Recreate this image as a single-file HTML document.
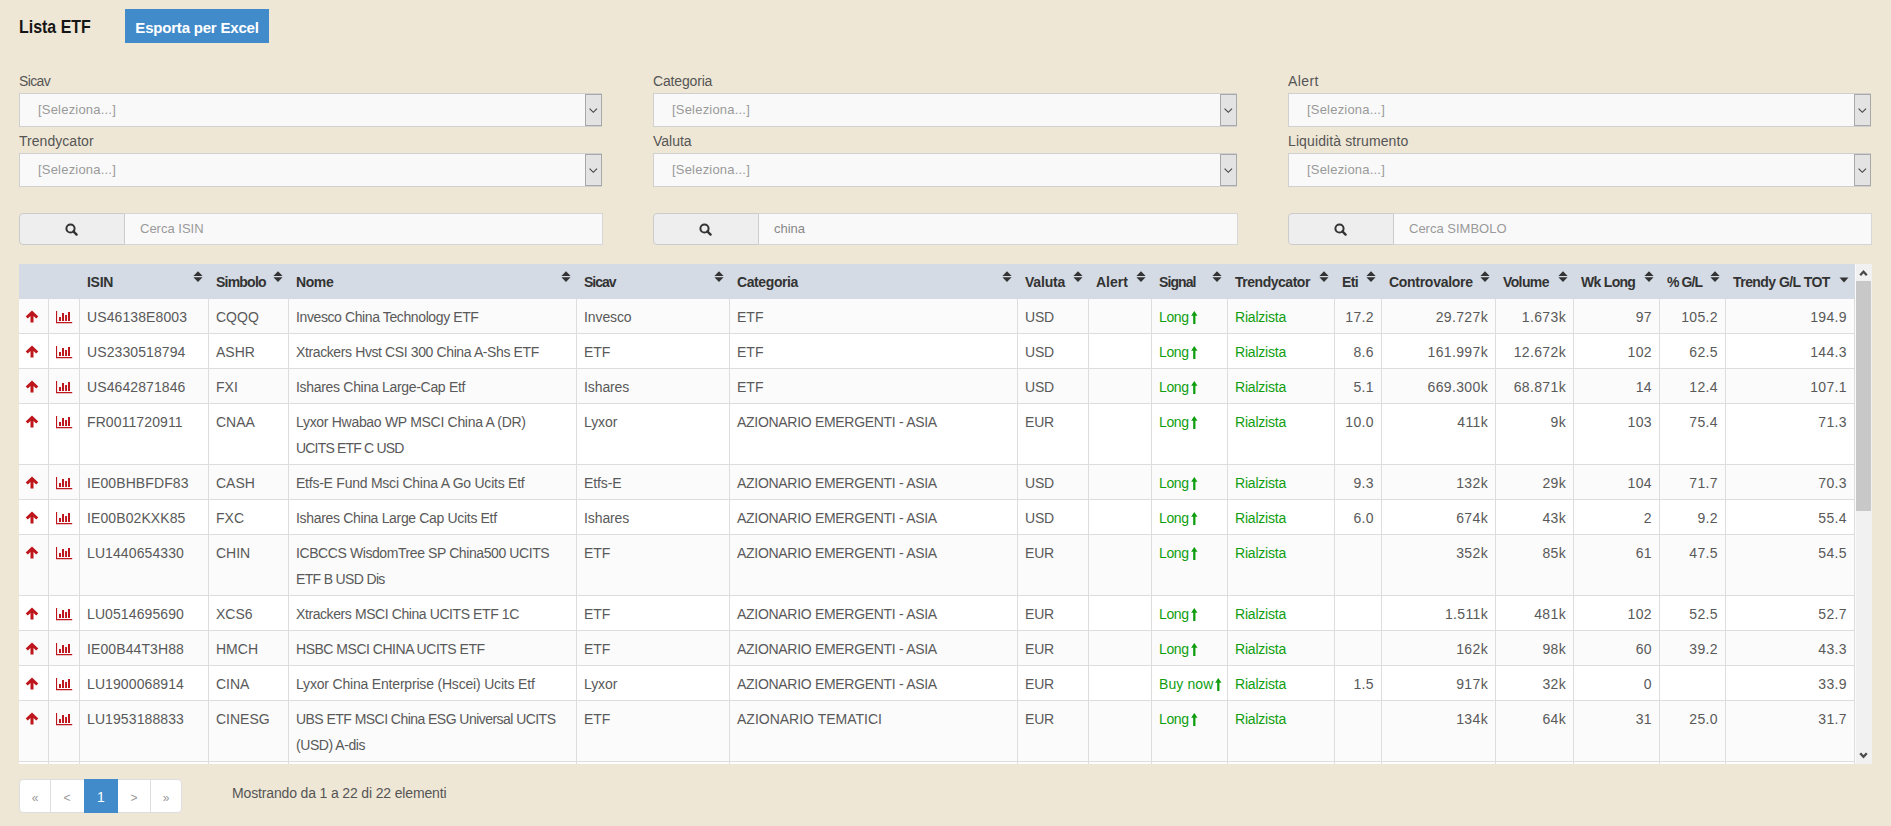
<!DOCTYPE html><html><head><meta charset="utf-8"><title>Lista ETF</title><style>
*{margin:0;padding:0;box-sizing:border-box}
html,body{width:1891px;height:826px;overflow:hidden;background:#EFE7D5;font-family:"Liberation Sans", sans-serif;}
.a{position:absolute;white-space:nowrap}
.t{font-size:14px;color:#595959;line-height:26px}
.h{font-size:14px;color:#333;font-weight:bold;line-height:20px}
.g{color:#109E10}
.lbl{font-size:14px;color:#555;line-height:16px}
.sel{background:#F9F9F9;border:1px solid #D0D0D0}
.ph{font-size:13px;color:#999;line-height:16px;letter-spacing:0.2px}
.dd{background:#E3E3E3;border:1px solid #A8A8A8}
</style></head><body>
<div class="a" style="left:19px;top:15px;font-size:19px;line-height:24px;font-weight:bold;color:#151515;transform:scaleX(0.84);transform-origin:0 0">Lista ETF</div>
<div class="a" style="left:125px;top:9px;width:144px;height:34px;background:#428BCA"></div>
<div class="a" style="left:125px;top:19px;width:144px;text-align:center;font-size:15px;letter-spacing:-0.2px;line-height:18px;font-weight:bold;color:#fff">Esporta per Excel</div>
<div class="a lbl" style="left:19px;top:73px;letter-spacing:-0.65px">Sicav</div>
<div class="a sel" style="left:19px;top:93px;width:583px;height:34px"></div>
<div class="a ph" style="left:38px;top:102px">[Seleziona...]</div>
<div class="a dd" style="left:585px;top:94px;width:17px;height:32px"><svg width="10" height="6" viewBox="0 0 10 6" style="position:absolute;left:2.5px;top:12.5px"><path d="M0.6 0.7 L4.3 4.3 L8 0.7" fill="none" stroke="#444" stroke-width="1.15"/></svg></div>
<div class="a lbl" style="left:19px;top:133px;letter-spacing:0.04px">Trendycator</div>
<div class="a sel" style="left:19px;top:153px;width:583px;height:34px"></div>
<div class="a ph" style="left:38px;top:162px">[Seleziona...]</div>
<div class="a dd" style="left:585px;top:154px;width:17px;height:32px"><svg width="10" height="6" viewBox="0 0 10 6" style="position:absolute;left:2.5px;top:12.5px"><path d="M0.6 0.7 L4.3 4.3 L8 0.7" fill="none" stroke="#444" stroke-width="1.15"/></svg></div>
<div class="a lbl" style="left:653px;top:73px;letter-spacing:-0.162px">Categoria</div>
<div class="a sel" style="left:653px;top:93px;width:584px;height:34px"></div>
<div class="a ph" style="left:672px;top:102px">[Seleziona...]</div>
<div class="a dd" style="left:1220px;top:94px;width:17px;height:32px"><svg width="10" height="6" viewBox="0 0 10 6" style="position:absolute;left:2.5px;top:12.5px"><path d="M0.6 0.7 L4.3 4.3 L8 0.7" fill="none" stroke="#444" stroke-width="1.15"/></svg></div>
<div class="a lbl" style="left:653px;top:133px;letter-spacing:-0.02px">Valuta</div>
<div class="a sel" style="left:653px;top:153px;width:584px;height:34px"></div>
<div class="a ph" style="left:672px;top:162px">[Seleziona...]</div>
<div class="a dd" style="left:1220px;top:154px;width:17px;height:32px"><svg width="10" height="6" viewBox="0 0 10 6" style="position:absolute;left:2.5px;top:12.5px"><path d="M0.6 0.7 L4.3 4.3 L8 0.7" fill="none" stroke="#444" stroke-width="1.15"/></svg></div>
<div class="a lbl" style="left:1288px;top:73px;letter-spacing:0.4px">Alert</div>
<div class="a sel" style="left:1288px;top:93px;width:583px;height:34px"></div>
<div class="a ph" style="left:1307px;top:102px">[Seleziona...]</div>
<div class="a dd" style="left:1854px;top:94px;width:17px;height:32px"><svg width="10" height="6" viewBox="0 0 10 6" style="position:absolute;left:2.5px;top:12.5px"><path d="M0.6 0.7 L4.3 4.3 L8 0.7" fill="none" stroke="#444" stroke-width="1.15"/></svg></div>
<div class="a lbl" style="left:1288px;top:133px;letter-spacing:0.111px">Liquidità strumento</div>
<div class="a sel" style="left:1288px;top:153px;width:583px;height:34px"></div>
<div class="a ph" style="left:1307px;top:162px">[Seleziona...]</div>
<div class="a dd" style="left:1854px;top:154px;width:17px;height:32px"><svg width="10" height="6" viewBox="0 0 10 6" style="position:absolute;left:2.5px;top:12.5px"><path d="M0.6 0.7 L4.3 4.3 L8 0.7" fill="none" stroke="#444" stroke-width="1.15"/></svg></div>
<div class="a" style="left:19px;top:213px;width:106px;height:32px;background:#EEEEEE;border:1px solid #CCCCCC;border-radius:4px 0 0 4px"><svg width="14" height="14" viewBox="0 0 14 14" style="position:absolute;left:45px;top:9px"><circle cx="5.5" cy="5.5" r="4.1" fill="none" stroke="#333" stroke-width="2"/><path d="M8.4 8.4 L11.6 11.6" stroke="#333" stroke-width="2.4" stroke-linecap="round"/></svg></div>
<div class="a" style="left:125px;top:213px;width:478px;height:32px;background:#F9F9F9;border:1px solid #D6D6D6;border-left:none"></div>
<div class="a" style="left:140px;top:221px;font-size:13px;line-height:16px;color:#999">Cerca ISIN</div>
<div class="a" style="left:653px;top:213px;width:106px;height:32px;background:#EEEEEE;border:1px solid #CCCCCC;border-radius:4px 0 0 4px"><svg width="14" height="14" viewBox="0 0 14 14" style="position:absolute;left:45px;top:9px"><circle cx="5.5" cy="5.5" r="4.1" fill="none" stroke="#333" stroke-width="2"/><path d="M8.4 8.4 L11.6 11.6" stroke="#333" stroke-width="2.4" stroke-linecap="round"/></svg></div>
<div class="a" style="left:759px;top:213px;width:479px;height:32px;background:#F9F9F9;border:1px solid #D6D6D6;border-left:none"></div>
<div class="a" style="left:774px;top:221px;font-size:13px;line-height:16px;color:#888">china</div>
<div class="a" style="left:1288px;top:213px;width:106px;height:32px;background:#EEEEEE;border:1px solid #CCCCCC;border-radius:4px 0 0 4px"><svg width="14" height="14" viewBox="0 0 14 14" style="position:absolute;left:45px;top:9px"><circle cx="5.5" cy="5.5" r="4.1" fill="none" stroke="#333" stroke-width="2"/><path d="M8.4 8.4 L11.6 11.6" stroke="#333" stroke-width="2.4" stroke-linecap="round"/></svg></div>
<div class="a" style="left:1394px;top:213px;width:478px;height:32px;background:#F9F9F9;border:1px solid #D6D6D6;border-left:none"></div>
<div class="a" style="left:1409px;top:221px;font-size:13px;line-height:16px;color:#999">Cerca SIMBOLO</div>
<div class="a" style="left:19px;top:264px;width:1836px;height:35px;background:#D4DBE4"></div>
<div class="a h" style="left:87px;top:272px;letter-spacing:-0.27px">ISIN</div>
<div class="a" style="left:193px;top:271px;line-height:0"><svg width="10" height="12" viewBox="0 0 10 12"><path d="M5 0.2 L9.6 4.9 L0.4 4.9 Z M0.4 6.3 L9.6 6.3 L5 11 Z" fill="#333"/></svg></div>
<div class="a h" style="left:216px;top:272px;letter-spacing:-0.78px">Simbolo</div>
<div class="a" style="left:273px;top:271px;line-height:0"><svg width="10" height="12" viewBox="0 0 10 12"><path d="M5 0.2 L9.6 4.9 L0.4 4.9 Z M0.4 6.3 L9.6 6.3 L5 11 Z" fill="#333"/></svg></div>
<div class="a h" style="left:296px;top:272px;letter-spacing:-0.4px">Nome</div>
<div class="a" style="left:561px;top:271px;line-height:0"><svg width="10" height="12" viewBox="0 0 10 12"><path d="M5 0.2 L9.6 4.9 L0.4 4.9 Z M0.4 6.3 L9.6 6.3 L5 11 Z" fill="#333"/></svg></div>
<div class="a h" style="left:584px;top:272px;letter-spacing:-1.0px">Sicav</div>
<div class="a" style="left:714px;top:271px;line-height:0"><svg width="10" height="12" viewBox="0 0 10 12"><path d="M5 0.2 L9.6 4.9 L0.4 4.9 Z M0.4 6.3 L9.6 6.3 L5 11 Z" fill="#333"/></svg></div>
<div class="a h" style="left:737px;top:272px;letter-spacing:-0.4px">Categoria</div>
<div class="a" style="left:1002px;top:271px;line-height:0"><svg width="10" height="12" viewBox="0 0 10 12"><path d="M5 0.2 L9.6 4.9 L0.4 4.9 Z M0.4 6.3 L9.6 6.3 L5 11 Z" fill="#333"/></svg></div>
<div class="a h" style="left:1025px;top:272px;letter-spacing:-0.2px">Valuta</div>
<div class="a" style="left:1073px;top:271px;line-height:0"><svg width="10" height="12" viewBox="0 0 10 12"><path d="M5 0.2 L9.6 4.9 L0.4 4.9 Z M0.4 6.3 L9.6 6.3 L5 11 Z" fill="#333"/></svg></div>
<div class="a h" style="left:1096px;top:272px;letter-spacing:0.0px">Alert</div>
<div class="a" style="left:1136px;top:271px;line-height:0"><svg width="10" height="12" viewBox="0 0 10 12"><path d="M5 0.2 L9.6 4.9 L0.4 4.9 Z M0.4 6.3 L9.6 6.3 L5 11 Z" fill="#333"/></svg></div>
<div class="a h" style="left:1159px;top:272px;letter-spacing:-0.9px">Signal</div>
<div class="a" style="left:1212px;top:271px;line-height:0"><svg width="10" height="12" viewBox="0 0 10 12"><path d="M5 0.2 L9.6 4.9 L0.4 4.9 Z M0.4 6.3 L9.6 6.3 L5 11 Z" fill="#333"/></svg></div>
<div class="a h" style="left:1235px;top:272px;letter-spacing:-0.48px">Trendycator</div>
<div class="a" style="left:1319px;top:271px;line-height:0"><svg width="10" height="12" viewBox="0 0 10 12"><path d="M5 0.2 L9.6 4.9 L0.4 4.9 Z M0.4 6.3 L9.6 6.3 L5 11 Z" fill="#333"/></svg></div>
<div class="a h" style="left:1342px;top:272px;letter-spacing:-0.6px">Eti</div>
<div class="a" style="left:1366px;top:271px;line-height:0"><svg width="10" height="12" viewBox="0 0 10 12"><path d="M5 0.2 L9.6 4.9 L0.4 4.9 Z M0.4 6.3 L9.6 6.3 L5 11 Z" fill="#333"/></svg></div>
<div class="a h" style="left:1389px;top:272px;letter-spacing:-0.29px">Controvalore</div>
<div class="a" style="left:1480px;top:271px;line-height:0"><svg width="10" height="12" viewBox="0 0 10 12"><path d="M5 0.2 L9.6 4.9 L0.4 4.9 Z M0.4 6.3 L9.6 6.3 L5 11 Z" fill="#333"/></svg></div>
<div class="a h" style="left:1503px;top:272px;letter-spacing:-0.62px">Volume</div>
<div class="a" style="left:1558px;top:271px;line-height:0"><svg width="10" height="12" viewBox="0 0 10 12"><path d="M5 0.2 L9.6 4.9 L0.4 4.9 Z M0.4 6.3 L9.6 6.3 L5 11 Z" fill="#333"/></svg></div>
<div class="a h" style="left:1581px;top:272px;letter-spacing:-0.7px">Wk Long</div>
<div class="a" style="left:1644px;top:271px;line-height:0"><svg width="10" height="12" viewBox="0 0 10 12"><path d="M5 0.2 L9.6 4.9 L0.4 4.9 Z M0.4 6.3 L9.6 6.3 L5 11 Z" fill="#333"/></svg></div>
<div class="a h" style="left:1667px;top:272px;letter-spacing:-0.9px">% G/L</div>
<div class="a" style="left:1710px;top:271px;line-height:0"><svg width="10" height="12" viewBox="0 0 10 12"><path d="M5 0.2 L9.6 4.9 L0.4 4.9 Z M0.4 6.3 L9.6 6.3 L5 11 Z" fill="#333"/></svg></div>
<div class="a h" style="left:1733px;top:272px;letter-spacing:-0.55px">Trendy G/L TOT</div>
<div class="a" style="left:1839px;top:277px;line-height:0"><svg width="10" height="6" viewBox="0 0 10 6"><path d="M0.5 0.5 L9.5 0.5 L5 5.5 Z" fill="#333"/></svg></div>
<div class="a" style="left:19px;top:299px;width:1836px;height:465px;overflow:hidden">
<div class="a" style="left:0;top:0px;width:1836px;height:35px;background:#FBFBFB;border-bottom:1px solid #DDDDDD"></div>
<div class="a" style="left:6px;top:11px;line-height:0"><svg width="14" height="13" viewBox="0 0 14 13"><path d="M7 0.5 L13.3 6.6 L11.2 8.6 L8.5 5.9 L8.5 12.5 L5.5 12.5 L5.5 5.9 L2.8 8.6 L0.7 6.6 Z" fill="#BD161C"/></svg></div>
<div class="a" style="left:37px;top:12px;line-height:0"><svg width="17" height="13" viewBox="0 0 17 13"><path d="M0 0 H1.1 V11 H16.2 V12.2 H0 Z M3 6 H5 V9.9 H3 Z M6 2 H8 V9.9 H6 Z M9.1 4 H11 V9.9 H9.1 Z M12 1 H14 V9.9 H12 Z" fill="#BD161C"/></svg></div>
<div class="a t" style="left:68px;top:5px;letter-spacing:0.1px">US46138E8003</div>
<div class="a t" style="left:197px;top:5px;letter-spacing:0px">CQQQ</div>
<div class="a t" style="left:277px;top:5px;letter-spacing:-0.393px">Invesco China Technology ETF</div>
<div class="a t" style="left:565px;top:5px;letter-spacing:-0.1px">Invesco</div>
<div class="a t" style="left:718px;top:5px;letter-spacing:0.0px">ETF</div>
<div class="a t" style="left:1006px;top:5px;letter-spacing:-0.2px">USD</div>
<div class="a t g" style="left:1140px;top:5px;letter-spacing:-0.4px">Long<span style="display:inline-block;width:2px"></span><svg width="7" height="13" viewBox="0 0 7 13" style="vertical-align:-2px"><path d="M3.3 0 L6.5 4.8 L4.45 4.8 L4.45 13 L2.15 13 L2.15 4.8 L0.1 4.8 Z" fill="#109E10"/></svg></div>
<div class="a t g" style="left:1216px;top:5px;letter-spacing:-0.2px">Rialzista</div>
<div class="a t" style="right:481px;top:5px;letter-spacing:0.35px">17.2</div>
<div class="a t" style="right:367px;top:5px;letter-spacing:0.35px">29.727k</div>
<div class="a t" style="right:289px;top:5px;letter-spacing:0.35px">1.673k</div>
<div class="a t" style="right:203px;top:5px;letter-spacing:0.35px">97</div>
<div class="a t" style="right:137px;top:5px;letter-spacing:0.35px">105.2</div>
<div class="a t" style="right:8px;top:5px;letter-spacing:0.35px">194.9</div>
<div class="a" style="left:0;top:35px;width:1836px;height:35px;background:#FFFFFF;border-bottom:1px solid #DDDDDD"></div>
<div class="a" style="left:6px;top:46px;line-height:0"><svg width="14" height="13" viewBox="0 0 14 13"><path d="M7 0.5 L13.3 6.6 L11.2 8.6 L8.5 5.9 L8.5 12.5 L5.5 12.5 L5.5 5.9 L2.8 8.6 L0.7 6.6 Z" fill="#BD161C"/></svg></div>
<div class="a" style="left:37px;top:47px;line-height:0"><svg width="17" height="13" viewBox="0 0 17 13"><path d="M0 0 H1.1 V11 H16.2 V12.2 H0 Z M3 6 H5 V9.9 H3 Z M6 2 H8 V9.9 H6 Z M9.1 4 H11 V9.9 H9.1 Z M12 1 H14 V9.9 H12 Z" fill="#BD161C"/></svg></div>
<div class="a t" style="left:68px;top:40px;letter-spacing:0.1px">US2330518794</div>
<div class="a t" style="left:197px;top:40px;letter-spacing:0px">ASHR</div>
<div class="a t" style="left:277px;top:40px;letter-spacing:-0.386px">Xtrackers Hvst CSI 300 China A-Shs ETF</div>
<div class="a t" style="left:565px;top:40px;letter-spacing:-0.1px">ETF</div>
<div class="a t" style="left:718px;top:40px;letter-spacing:0.0px">ETF</div>
<div class="a t" style="left:1006px;top:40px;letter-spacing:-0.2px">USD</div>
<div class="a t g" style="left:1140px;top:40px;letter-spacing:-0.4px">Long<span style="display:inline-block;width:2px"></span><svg width="7" height="13" viewBox="0 0 7 13" style="vertical-align:-2px"><path d="M3.3 0 L6.5 4.8 L4.45 4.8 L4.45 13 L2.15 13 L2.15 4.8 L0.1 4.8 Z" fill="#109E10"/></svg></div>
<div class="a t g" style="left:1216px;top:40px;letter-spacing:-0.2px">Rialzista</div>
<div class="a t" style="right:481px;top:40px;letter-spacing:0.35px">8.6</div>
<div class="a t" style="right:367px;top:40px;letter-spacing:0.35px">161.997k</div>
<div class="a t" style="right:289px;top:40px;letter-spacing:0.35px">12.672k</div>
<div class="a t" style="right:203px;top:40px;letter-spacing:0.35px">102</div>
<div class="a t" style="right:137px;top:40px;letter-spacing:0.35px">62.5</div>
<div class="a t" style="right:8px;top:40px;letter-spacing:0.35px">144.3</div>
<div class="a" style="left:0;top:70px;width:1836px;height:35px;background:#FBFBFB;border-bottom:1px solid #DDDDDD"></div>
<div class="a" style="left:6px;top:81px;line-height:0"><svg width="14" height="13" viewBox="0 0 14 13"><path d="M7 0.5 L13.3 6.6 L11.2 8.6 L8.5 5.9 L8.5 12.5 L5.5 12.5 L5.5 5.9 L2.8 8.6 L0.7 6.6 Z" fill="#BD161C"/></svg></div>
<div class="a" style="left:37px;top:82px;line-height:0"><svg width="17" height="13" viewBox="0 0 17 13"><path d="M0 0 H1.1 V11 H16.2 V12.2 H0 Z M3 6 H5 V9.9 H3 Z M6 2 H8 V9.9 H6 Z M9.1 4 H11 V9.9 H9.1 Z M12 1 H14 V9.9 H12 Z" fill="#BD161C"/></svg></div>
<div class="a t" style="left:68px;top:75px;letter-spacing:0.1px">US4642871846</div>
<div class="a t" style="left:197px;top:75px;letter-spacing:0px">FXI</div>
<div class="a t" style="left:277px;top:75px;letter-spacing:-0.308px">Ishares China Large-Cap Etf</div>
<div class="a t" style="left:565px;top:75px;letter-spacing:-0.1px">Ishares</div>
<div class="a t" style="left:718px;top:75px;letter-spacing:0.0px">ETF</div>
<div class="a t" style="left:1006px;top:75px;letter-spacing:-0.2px">USD</div>
<div class="a t g" style="left:1140px;top:75px;letter-spacing:-0.4px">Long<span style="display:inline-block;width:2px"></span><svg width="7" height="13" viewBox="0 0 7 13" style="vertical-align:-2px"><path d="M3.3 0 L6.5 4.8 L4.45 4.8 L4.45 13 L2.15 13 L2.15 4.8 L0.1 4.8 Z" fill="#109E10"/></svg></div>
<div class="a t g" style="left:1216px;top:75px;letter-spacing:-0.2px">Rialzista</div>
<div class="a t" style="right:481px;top:75px;letter-spacing:0.35px">5.1</div>
<div class="a t" style="right:367px;top:75px;letter-spacing:0.35px">669.300k</div>
<div class="a t" style="right:289px;top:75px;letter-spacing:0.35px">68.871k</div>
<div class="a t" style="right:203px;top:75px;letter-spacing:0.35px">14</div>
<div class="a t" style="right:137px;top:75px;letter-spacing:0.35px">12.4</div>
<div class="a t" style="right:8px;top:75px;letter-spacing:0.35px">107.1</div>
<div class="a" style="left:0;top:105px;width:1836px;height:61px;background:#FFFFFF;border-bottom:1px solid #DDDDDD"></div>
<div class="a" style="left:6px;top:116px;line-height:0"><svg width="14" height="13" viewBox="0 0 14 13"><path d="M7 0.5 L13.3 6.6 L11.2 8.6 L8.5 5.9 L8.5 12.5 L5.5 12.5 L5.5 5.9 L2.8 8.6 L0.7 6.6 Z" fill="#BD161C"/></svg></div>
<div class="a" style="left:37px;top:117px;line-height:0"><svg width="17" height="13" viewBox="0 0 17 13"><path d="M0 0 H1.1 V11 H16.2 V12.2 H0 Z M3 6 H5 V9.9 H3 Z M6 2 H8 V9.9 H6 Z M9.1 4 H11 V9.9 H9.1 Z M12 1 H14 V9.9 H12 Z" fill="#BD161C"/></svg></div>
<div class="a t" style="left:68px;top:110px;letter-spacing:0.1px">FR0011720911</div>
<div class="a t" style="left:197px;top:110px;letter-spacing:0px">CNAA</div>
<div class="a t" style="left:277px;top:110px;letter-spacing:-0.303px">Lyxor Hwabao WP MSCI China A (DR)</div>
<div class="a t" style="left:277px;top:136px;letter-spacing:-0.814px">UCITS ETF C USD</div>
<div class="a t" style="left:565px;top:110px;letter-spacing:-0.1px">Lyxor</div>
<div class="a t" style="left:718px;top:110px;letter-spacing:-0.3px">AZIONARIO EMERGENTI - ASIA</div>
<div class="a t" style="left:1006px;top:110px;letter-spacing:-0.2px">EUR</div>
<div class="a t g" style="left:1140px;top:110px;letter-spacing:-0.4px">Long<span style="display:inline-block;width:2px"></span><svg width="7" height="13" viewBox="0 0 7 13" style="vertical-align:-2px"><path d="M3.3 0 L6.5 4.8 L4.45 4.8 L4.45 13 L2.15 13 L2.15 4.8 L0.1 4.8 Z" fill="#109E10"/></svg></div>
<div class="a t g" style="left:1216px;top:110px;letter-spacing:-0.2px">Rialzista</div>
<div class="a t" style="right:481px;top:110px;letter-spacing:0.35px">10.0</div>
<div class="a t" style="right:367px;top:110px;letter-spacing:0.35px">411k</div>
<div class="a t" style="right:289px;top:110px;letter-spacing:0.35px">9k</div>
<div class="a t" style="right:203px;top:110px;letter-spacing:0.35px">103</div>
<div class="a t" style="right:137px;top:110px;letter-spacing:0.35px">75.4</div>
<div class="a t" style="right:8px;top:110px;letter-spacing:0.35px">71.3</div>
<div class="a" style="left:0;top:166px;width:1836px;height:35px;background:#FBFBFB;border-bottom:1px solid #DDDDDD"></div>
<div class="a" style="left:6px;top:177px;line-height:0"><svg width="14" height="13" viewBox="0 0 14 13"><path d="M7 0.5 L13.3 6.6 L11.2 8.6 L8.5 5.9 L8.5 12.5 L5.5 12.5 L5.5 5.9 L2.8 8.6 L0.7 6.6 Z" fill="#BD161C"/></svg></div>
<div class="a" style="left:37px;top:178px;line-height:0"><svg width="17" height="13" viewBox="0 0 17 13"><path d="M0 0 H1.1 V11 H16.2 V12.2 H0 Z M3 6 H5 V9.9 H3 Z M6 2 H8 V9.9 H6 Z M9.1 4 H11 V9.9 H9.1 Z M12 1 H14 V9.9 H12 Z" fill="#BD161C"/></svg></div>
<div class="a t" style="left:68px;top:171px;letter-spacing:0.1px">IE00BHBFDF83</div>
<div class="a t" style="left:197px;top:171px;letter-spacing:0px">CASH</div>
<div class="a t" style="left:277px;top:171px;letter-spacing:-0.239px">Etfs-E Fund Msci China A Go Ucits Etf</div>
<div class="a t" style="left:565px;top:171px;letter-spacing:-0.1px">Etfs-E</div>
<div class="a t" style="left:718px;top:171px;letter-spacing:-0.3px">AZIONARIO EMERGENTI - ASIA</div>
<div class="a t" style="left:1006px;top:171px;letter-spacing:-0.2px">USD</div>
<div class="a t g" style="left:1140px;top:171px;letter-spacing:-0.4px">Long<span style="display:inline-block;width:2px"></span><svg width="7" height="13" viewBox="0 0 7 13" style="vertical-align:-2px"><path d="M3.3 0 L6.5 4.8 L4.45 4.8 L4.45 13 L2.15 13 L2.15 4.8 L0.1 4.8 Z" fill="#109E10"/></svg></div>
<div class="a t g" style="left:1216px;top:171px;letter-spacing:-0.2px">Rialzista</div>
<div class="a t" style="right:481px;top:171px;letter-spacing:0.35px">9.3</div>
<div class="a t" style="right:367px;top:171px;letter-spacing:0.35px">132k</div>
<div class="a t" style="right:289px;top:171px;letter-spacing:0.35px">29k</div>
<div class="a t" style="right:203px;top:171px;letter-spacing:0.35px">104</div>
<div class="a t" style="right:137px;top:171px;letter-spacing:0.35px">71.7</div>
<div class="a t" style="right:8px;top:171px;letter-spacing:0.35px">70.3</div>
<div class="a" style="left:0;top:201px;width:1836px;height:35px;background:#FFFFFF;border-bottom:1px solid #DDDDDD"></div>
<div class="a" style="left:6px;top:212px;line-height:0"><svg width="14" height="13" viewBox="0 0 14 13"><path d="M7 0.5 L13.3 6.6 L11.2 8.6 L8.5 5.9 L8.5 12.5 L5.5 12.5 L5.5 5.9 L2.8 8.6 L0.7 6.6 Z" fill="#BD161C"/></svg></div>
<div class="a" style="left:37px;top:213px;line-height:0"><svg width="17" height="13" viewBox="0 0 17 13"><path d="M0 0 H1.1 V11 H16.2 V12.2 H0 Z M3 6 H5 V9.9 H3 Z M6 2 H8 V9.9 H6 Z M9.1 4 H11 V9.9 H9.1 Z M12 1 H14 V9.9 H12 Z" fill="#BD161C"/></svg></div>
<div class="a t" style="left:68px;top:206px;letter-spacing:0.1px">IE00B02KXK85</div>
<div class="a t" style="left:197px;top:206px;letter-spacing:0px">FXC</div>
<div class="a t" style="left:277px;top:206px;letter-spacing:-0.331px">Ishares China Large Cap Ucits Etf</div>
<div class="a t" style="left:565px;top:206px;letter-spacing:-0.1px">Ishares</div>
<div class="a t" style="left:718px;top:206px;letter-spacing:-0.3px">AZIONARIO EMERGENTI - ASIA</div>
<div class="a t" style="left:1006px;top:206px;letter-spacing:-0.2px">USD</div>
<div class="a t g" style="left:1140px;top:206px;letter-spacing:-0.4px">Long<span style="display:inline-block;width:2px"></span><svg width="7" height="13" viewBox="0 0 7 13" style="vertical-align:-2px"><path d="M3.3 0 L6.5 4.8 L4.45 4.8 L4.45 13 L2.15 13 L2.15 4.8 L0.1 4.8 Z" fill="#109E10"/></svg></div>
<div class="a t g" style="left:1216px;top:206px;letter-spacing:-0.2px">Rialzista</div>
<div class="a t" style="right:481px;top:206px;letter-spacing:0.35px">6.0</div>
<div class="a t" style="right:367px;top:206px;letter-spacing:0.35px">674k</div>
<div class="a t" style="right:289px;top:206px;letter-spacing:0.35px">43k</div>
<div class="a t" style="right:203px;top:206px;letter-spacing:0.35px">2</div>
<div class="a t" style="right:137px;top:206px;letter-spacing:0.35px">9.2</div>
<div class="a t" style="right:8px;top:206px;letter-spacing:0.35px">55.4</div>
<div class="a" style="left:0;top:236px;width:1836px;height:61px;background:#FBFBFB;border-bottom:1px solid #DDDDDD"></div>
<div class="a" style="left:6px;top:247px;line-height:0"><svg width="14" height="13" viewBox="0 0 14 13"><path d="M7 0.5 L13.3 6.6 L11.2 8.6 L8.5 5.9 L8.5 12.5 L5.5 12.5 L5.5 5.9 L2.8 8.6 L0.7 6.6 Z" fill="#BD161C"/></svg></div>
<div class="a" style="left:37px;top:248px;line-height:0"><svg width="17" height="13" viewBox="0 0 17 13"><path d="M0 0 H1.1 V11 H16.2 V12.2 H0 Z M3 6 H5 V9.9 H3 Z M6 2 H8 V9.9 H6 Z M9.1 4 H11 V9.9 H9.1 Z M12 1 H14 V9.9 H12 Z" fill="#BD161C"/></svg></div>
<div class="a t" style="left:68px;top:241px;letter-spacing:0.1px">LU1440654330</div>
<div class="a t" style="left:197px;top:241px;letter-spacing:0px">CHIN</div>
<div class="a t" style="left:277px;top:241px;letter-spacing:-0.412px">ICBCCS WisdomTree SP China500 UCITS</div>
<div class="a t" style="left:277px;top:267px;letter-spacing:-0.658px">ETF B USD Dis</div>
<div class="a t" style="left:565px;top:241px;letter-spacing:-0.1px">ETF</div>
<div class="a t" style="left:718px;top:241px;letter-spacing:-0.3px">AZIONARIO EMERGENTI - ASIA</div>
<div class="a t" style="left:1006px;top:241px;letter-spacing:-0.2px">EUR</div>
<div class="a t g" style="left:1140px;top:241px;letter-spacing:-0.4px">Long<span style="display:inline-block;width:2px"></span><svg width="7" height="13" viewBox="0 0 7 13" style="vertical-align:-2px"><path d="M3.3 0 L6.5 4.8 L4.45 4.8 L4.45 13 L2.15 13 L2.15 4.8 L0.1 4.8 Z" fill="#109E10"/></svg></div>
<div class="a t g" style="left:1216px;top:241px;letter-spacing:-0.2px">Rialzista</div>
<div class="a t" style="right:367px;top:241px;letter-spacing:0.35px">352k</div>
<div class="a t" style="right:289px;top:241px;letter-spacing:0.35px">85k</div>
<div class="a t" style="right:203px;top:241px;letter-spacing:0.35px">61</div>
<div class="a t" style="right:137px;top:241px;letter-spacing:0.35px">47.5</div>
<div class="a t" style="right:8px;top:241px;letter-spacing:0.35px">54.5</div>
<div class="a" style="left:0;top:297px;width:1836px;height:35px;background:#FFFFFF;border-bottom:1px solid #DDDDDD"></div>
<div class="a" style="left:6px;top:308px;line-height:0"><svg width="14" height="13" viewBox="0 0 14 13"><path d="M7 0.5 L13.3 6.6 L11.2 8.6 L8.5 5.9 L8.5 12.5 L5.5 12.5 L5.5 5.9 L2.8 8.6 L0.7 6.6 Z" fill="#BD161C"/></svg></div>
<div class="a" style="left:37px;top:309px;line-height:0"><svg width="17" height="13" viewBox="0 0 17 13"><path d="M0 0 H1.1 V11 H16.2 V12.2 H0 Z M3 6 H5 V9.9 H3 Z M6 2 H8 V9.9 H6 Z M9.1 4 H11 V9.9 H9.1 Z M12 1 H14 V9.9 H12 Z" fill="#BD161C"/></svg></div>
<div class="a t" style="left:68px;top:302px;letter-spacing:0.1px">LU0514695690</div>
<div class="a t" style="left:197px;top:302px;letter-spacing:0px">XCS6</div>
<div class="a t" style="left:277px;top:302px;letter-spacing:-0.413px">Xtrackers MSCI China UCITS ETF 1C</div>
<div class="a t" style="left:565px;top:302px;letter-spacing:-0.1px">ETF</div>
<div class="a t" style="left:718px;top:302px;letter-spacing:-0.3px">AZIONARIO EMERGENTI - ASIA</div>
<div class="a t" style="left:1006px;top:302px;letter-spacing:-0.2px">EUR</div>
<div class="a t g" style="left:1140px;top:302px;letter-spacing:-0.4px">Long<span style="display:inline-block;width:2px"></span><svg width="7" height="13" viewBox="0 0 7 13" style="vertical-align:-2px"><path d="M3.3 0 L6.5 4.8 L4.45 4.8 L4.45 13 L2.15 13 L2.15 4.8 L0.1 4.8 Z" fill="#109E10"/></svg></div>
<div class="a t g" style="left:1216px;top:302px;letter-spacing:-0.2px">Rialzista</div>
<div class="a t" style="right:367px;top:302px;letter-spacing:0.35px">1.511k</div>
<div class="a t" style="right:289px;top:302px;letter-spacing:0.35px">481k</div>
<div class="a t" style="right:203px;top:302px;letter-spacing:0.35px">102</div>
<div class="a t" style="right:137px;top:302px;letter-spacing:0.35px">52.5</div>
<div class="a t" style="right:8px;top:302px;letter-spacing:0.35px">52.7</div>
<div class="a" style="left:0;top:332px;width:1836px;height:35px;background:#FBFBFB;border-bottom:1px solid #DDDDDD"></div>
<div class="a" style="left:6px;top:343px;line-height:0"><svg width="14" height="13" viewBox="0 0 14 13"><path d="M7 0.5 L13.3 6.6 L11.2 8.6 L8.5 5.9 L8.5 12.5 L5.5 12.5 L5.5 5.9 L2.8 8.6 L0.7 6.6 Z" fill="#BD161C"/></svg></div>
<div class="a" style="left:37px;top:344px;line-height:0"><svg width="17" height="13" viewBox="0 0 17 13"><path d="M0 0 H1.1 V11 H16.2 V12.2 H0 Z M3 6 H5 V9.9 H3 Z M6 2 H8 V9.9 H6 Z M9.1 4 H11 V9.9 H9.1 Z M12 1 H14 V9.9 H12 Z" fill="#BD161C"/></svg></div>
<div class="a t" style="left:68px;top:337px;letter-spacing:0.1px">IE00B44T3H88</div>
<div class="a t" style="left:197px;top:337px;letter-spacing:0px">HMCH</div>
<div class="a t" style="left:277px;top:337px;letter-spacing:-0.483px">HSBC MSCI CHINA UCITS ETF</div>
<div class="a t" style="left:565px;top:337px;letter-spacing:-0.1px">ETF</div>
<div class="a t" style="left:718px;top:337px;letter-spacing:-0.3px">AZIONARIO EMERGENTI - ASIA</div>
<div class="a t" style="left:1006px;top:337px;letter-spacing:-0.2px">EUR</div>
<div class="a t g" style="left:1140px;top:337px;letter-spacing:-0.4px">Long<span style="display:inline-block;width:2px"></span><svg width="7" height="13" viewBox="0 0 7 13" style="vertical-align:-2px"><path d="M3.3 0 L6.5 4.8 L4.45 4.8 L4.45 13 L2.15 13 L2.15 4.8 L0.1 4.8 Z" fill="#109E10"/></svg></div>
<div class="a t g" style="left:1216px;top:337px;letter-spacing:-0.2px">Rialzista</div>
<div class="a t" style="right:367px;top:337px;letter-spacing:0.35px">162k</div>
<div class="a t" style="right:289px;top:337px;letter-spacing:0.35px">98k</div>
<div class="a t" style="right:203px;top:337px;letter-spacing:0.35px">60</div>
<div class="a t" style="right:137px;top:337px;letter-spacing:0.35px">39.2</div>
<div class="a t" style="right:8px;top:337px;letter-spacing:0.35px">43.3</div>
<div class="a" style="left:0;top:367px;width:1836px;height:35px;background:#FFFFFF;border-bottom:1px solid #DDDDDD"></div>
<div class="a" style="left:6px;top:378px;line-height:0"><svg width="14" height="13" viewBox="0 0 14 13"><path d="M7 0.5 L13.3 6.6 L11.2 8.6 L8.5 5.9 L8.5 12.5 L5.5 12.5 L5.5 5.9 L2.8 8.6 L0.7 6.6 Z" fill="#BD161C"/></svg></div>
<div class="a" style="left:37px;top:379px;line-height:0"><svg width="17" height="13" viewBox="0 0 17 13"><path d="M0 0 H1.1 V11 H16.2 V12.2 H0 Z M3 6 H5 V9.9 H3 Z M6 2 H8 V9.9 H6 Z M9.1 4 H11 V9.9 H9.1 Z M12 1 H14 V9.9 H12 Z" fill="#BD161C"/></svg></div>
<div class="a t" style="left:68px;top:372px;letter-spacing:0.1px">LU1900068914</div>
<div class="a t" style="left:197px;top:372px;letter-spacing:0px">CINA</div>
<div class="a t" style="left:277px;top:372px;letter-spacing:-0.187px">Lyxor China Enterprise (Hscei) Ucits Etf</div>
<div class="a t" style="left:565px;top:372px;letter-spacing:-0.1px">Lyxor</div>
<div class="a t" style="left:718px;top:372px;letter-spacing:-0.3px">AZIONARIO EMERGENTI - ASIA</div>
<div class="a t" style="left:1006px;top:372px;letter-spacing:-0.2px">EUR</div>
<div class="a t g" style="left:1140px;top:372px;letter-spacing:0.1px">Buy now<span style="display:inline-block;width:2px"></span><svg width="7" height="13" viewBox="0 0 7 13" style="vertical-align:-2px"><path d="M3.3 0 L6.5 4.8 L4.45 4.8 L4.45 13 L2.15 13 L2.15 4.8 L0.1 4.8 Z" fill="#109E10"/></svg></div>
<div class="a t g" style="left:1216px;top:372px;letter-spacing:-0.2px">Rialzista</div>
<div class="a t" style="right:481px;top:372px;letter-spacing:0.35px">1.5</div>
<div class="a t" style="right:367px;top:372px;letter-spacing:0.35px">917k</div>
<div class="a t" style="right:289px;top:372px;letter-spacing:0.35px">32k</div>
<div class="a t" style="right:203px;top:372px;letter-spacing:0.35px">0</div>
<div class="a t" style="right:8px;top:372px;letter-spacing:0.35px">33.9</div>
<div class="a" style="left:0;top:402px;width:1836px;height:61px;background:#FBFBFB;border-bottom:1px solid #DDDDDD"></div>
<div class="a" style="left:6px;top:413px;line-height:0"><svg width="14" height="13" viewBox="0 0 14 13"><path d="M7 0.5 L13.3 6.6 L11.2 8.6 L8.5 5.9 L8.5 12.5 L5.5 12.5 L5.5 5.9 L2.8 8.6 L0.7 6.6 Z" fill="#BD161C"/></svg></div>
<div class="a" style="left:37px;top:414px;line-height:0"><svg width="17" height="13" viewBox="0 0 17 13"><path d="M0 0 H1.1 V11 H16.2 V12.2 H0 Z M3 6 H5 V9.9 H3 Z M6 2 H8 V9.9 H6 Z M9.1 4 H11 V9.9 H9.1 Z M12 1 H14 V9.9 H12 Z" fill="#BD161C"/></svg></div>
<div class="a t" style="left:68px;top:407px;letter-spacing:0.1px">LU1953188833</div>
<div class="a t" style="left:197px;top:407px;letter-spacing:0px">CINESG</div>
<div class="a t" style="left:277px;top:407px;letter-spacing:-0.543px">UBS ETF MSCI China ESG Universal UCITS</div>
<div class="a t" style="left:277px;top:433px;letter-spacing:-0.44px">(USD) A-dis</div>
<div class="a t" style="left:565px;top:407px;letter-spacing:-0.1px">ETF</div>
<div class="a t" style="left:718px;top:407px;letter-spacing:0.0px">AZIONARIO TEMATICI</div>
<div class="a t" style="left:1006px;top:407px;letter-spacing:-0.2px">EUR</div>
<div class="a t g" style="left:1140px;top:407px;letter-spacing:-0.4px">Long<span style="display:inline-block;width:2px"></span><svg width="7" height="13" viewBox="0 0 7 13" style="vertical-align:-2px"><path d="M3.3 0 L6.5 4.8 L4.45 4.8 L4.45 13 L2.15 13 L2.15 4.8 L0.1 4.8 Z" fill="#109E10"/></svg></div>
<div class="a t g" style="left:1216px;top:407px;letter-spacing:-0.2px">Rialzista</div>
<div class="a t" style="right:367px;top:407px;letter-spacing:0.35px">134k</div>
<div class="a t" style="right:289px;top:407px;letter-spacing:0.35px">64k</div>
<div class="a t" style="right:203px;top:407px;letter-spacing:0.35px">31</div>
<div class="a t" style="right:137px;top:407px;letter-spacing:0.35px">25.0</div>
<div class="a t" style="right:8px;top:407px;letter-spacing:0.35px">31.7</div>
<div class="a" style="left:0;top:463px;width:1836px;height:10px;background:#FFFFFF"></div>
<div class="a" style="left:29px;top:0;width:1px;height:465px;background:#DDDDDD"></div>
<div class="a" style="left:60px;top:0;width:1px;height:465px;background:#DDDDDD"></div>
<div class="a" style="left:189px;top:0;width:1px;height:465px;background:#DDDDDD"></div>
<div class="a" style="left:269px;top:0;width:1px;height:465px;background:#DDDDDD"></div>
<div class="a" style="left:557px;top:0;width:1px;height:465px;background:#DDDDDD"></div>
<div class="a" style="left:710px;top:0;width:1px;height:465px;background:#DDDDDD"></div>
<div class="a" style="left:998px;top:0;width:1px;height:465px;background:#DDDDDD"></div>
<div class="a" style="left:1069px;top:0;width:1px;height:465px;background:#DDDDDD"></div>
<div class="a" style="left:1132px;top:0;width:1px;height:465px;background:#DDDDDD"></div>
<div class="a" style="left:1208px;top:0;width:1px;height:465px;background:#DDDDDD"></div>
<div class="a" style="left:1315px;top:0;width:1px;height:465px;background:#DDDDDD"></div>
<div class="a" style="left:1362px;top:0;width:1px;height:465px;background:#DDDDDD"></div>
<div class="a" style="left:1476px;top:0;width:1px;height:465px;background:#DDDDDD"></div>
<div class="a" style="left:1554px;top:0;width:1px;height:465px;background:#DDDDDD"></div>
<div class="a" style="left:1640px;top:0;width:1px;height:465px;background:#DDDDDD"></div>
<div class="a" style="left:1706px;top:0;width:1px;height:465px;background:#DDDDDD"></div>
<div class="a" style="left:1835px;top:0;width:1px;height:465px;background:#DDDDDD"></div>
</div>
<div class="a" style="left:1855px;top:264px;width:17px;height:500px;background:#F1F1F1;border-left:1px solid #FAFAFA"></div>
<div class="a" style="left:1856px;top:281px;width:15px;height:230px;background:#C8C8C8"></div>
<svg class="a" style="left:1859px;top:269px" width="9" height="8" viewBox="0 0 9 8"><path d="M1.2 6.3 L4.5 2.7 L7.8 6.3" fill="none" stroke="#4A4A4A" stroke-width="2.3"/></svg>
<svg class="a" style="left:1859px;top:752px" width="9" height="8" viewBox="0 0 9 8"><path d="M1.2 1.2 L4.5 4.8 L7.8 1.2" fill="none" stroke="#4A4A4A" stroke-width="2.3"/></svg>
<div class="a" style="left:19px;top:779px;width:163px;height:34px;background:#fff;border:1px solid #DDDDDD;border-radius:4px"></div>
<div class="a" style="left:50px;top:779px;width:1px;height:34px;background:#DDDDDD"></div>
<div class="a" style="left:150px;top:779px;width:1px;height:34px;background:#DDDDDD"></div>
<div class="a" style="left:84px;top:779px;width:34px;height:34px;background:#428BCA"></div>
<div class="a" style="left:20px;width:30px;text-align:center;top:789px;font-size:12px;line-height:18px;color:#999">&laquo;</div>
<div class="a" style="left:52px;width:30px;text-align:center;top:789px;font-size:12px;line-height:18px;color:#999">&lt;</div>
<div class="a" style="left:86px;width:30px;text-align:center;top:788px;font-size:14px;line-height:18px;color:#fff">1</div>
<div class="a" style="left:119px;width:30px;text-align:center;top:789px;font-size:12px;line-height:18px;color:#999">&gt;</div>
<div class="a" style="left:151px;width:30px;text-align:center;top:789px;font-size:12px;line-height:18px;color:#999">&raquo;</div>
<div class="a" style="left:232px;top:783px;font-size:14px;line-height:20px;color:#555;letter-spacing:-0.15px">Mostrando da 1 a 22 di 22 elementi</div>
</body></html>
